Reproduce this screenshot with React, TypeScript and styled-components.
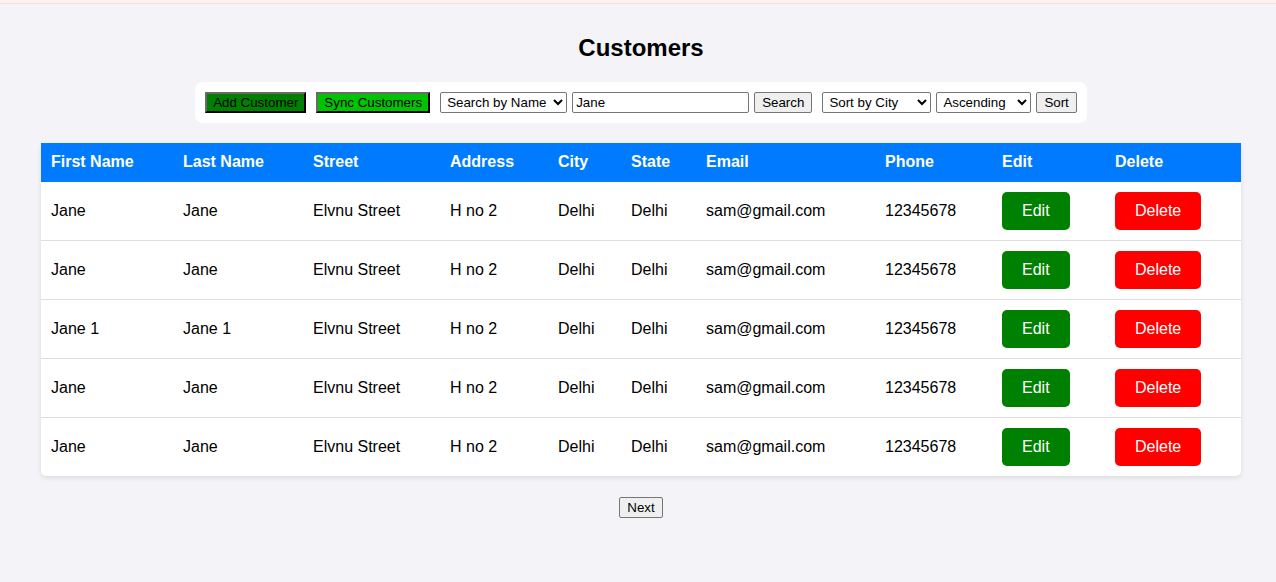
import React from "react";
import styled, { createGlobalStyle } from "styled-components";

const Global = createGlobalStyle`
  html, body { margin: 0; padding: 0; background: #f4f4f8; }
  body { font-family: "Liberation Sans", Arial, sans-serif; color: #000; }
`;

const TopStrip = styled.div`
  height: 3px;
  background: #fdf0ef;
  border-bottom: 1px solid #f6e2e0;
`;

const Page = styled.div`
  padding-left: 6px;
  display: flex;
  flex-direction: column;
  align-items: center;
`;

const Title = styled.h2`
  margin: 30px 0 20px;
  font-size: 24px;
  line-height: 28px;
  font-weight: bold;
`;

const Toolbar = styled.div`
  display: flex;
  align-items: center;
  background: #fff;
  border-radius: 8px;
  padding: 10px;
`;

const ColorButton = styled.button<{ $bg: string; $mr: number }>`
  font: 13.333px "Liberation Sans", Arial, sans-serif;
  height: 21px;
  padding: 1px 6px;
  margin-right: ${(p) => p.$mr}px;
  background: ${(p) => p.$bg};
  color: #000;
  border: 2px outset #767676;
  border-right-color: #111;
  border-bottom-color: #111;
  border-top-color: #6a6a6a;
  border-left-color: #6a6a6a;
  box-sizing: border-box;
`;

const PlainButton = styled.button<{ $mr?: number }>`
  font: 13.333px "Liberation Sans", Arial, sans-serif;
  height: 21px;
  padding: 1px 7px;
  margin-right: ${(p) => p.$mr ?? 0}px;
  background: #efefef;
  color: #000;
  border: 1px solid #767676;
  border-radius: 2px;
  box-sizing: border-box;
`;

const Select = styled.select<{ $w: number; $mr: number }>`
  font: 13.333px "Liberation Sans", Arial, sans-serif;
  width: ${(p) => p.$w}px;
  height: 21px;
  margin-right: ${(p) => p.$mr}px;
  background: #fff;
  color: #000;
  border: 1px solid #767676;
  border-radius: 2px;
  box-sizing: border-box;
  padding: 0 0 0 2px;
`;

const Input = styled.input`
  font: 13.333px "Liberation Sans", Arial, sans-serif;
  width: 177px;
  height: 21px;
  margin-right: 5px;
  padding: 1px 3px;
  border: 1px solid #767676;
  border-radius: 2px;
  box-sizing: border-box;
  color: #000;
`;

const Table = styled.table`
  margin-top: 20px;
  width: 1200px;
  table-layout: fixed;
  border-collapse: collapse;
  background: #fff;
  border-radius: 5px;
  box-shadow: 0 2px 5px rgba(0, 0, 0, 0.1);
  font-size: 16px;
`;

const Th = styled.th`
  background: #007bff;
  color: #fff;
  text-align: left;
  font-weight: bold;
  padding: 10px 10px 11px;
  line-height: 18px;
`;

const Tr = styled.tr`
  border-bottom: 1px solid #ddd;
  &:last-child { border-bottom: none; }
`;

const Td = styled.td`
  padding: 10px;
  height: 38px;
  line-height: 18px;
  vertical-align: middle;
`;

const ActionButton = styled.button<{ $bg: string }>`
  font: 16px "Liberation Sans", Arial, sans-serif;
  line-height: 18px;
  padding: 10px 20px;
  background: ${(p) => p.$bg};
  color: #fff;
  border: none;
  border-radius: 5px;
`;

const Footer = styled.div`
  margin-top: 21px;
`;

const cols = [132, 130, 137, 108, 73, 75, 179, 117, 113, 136];
const headers = ["First Name", "Last Name", "Street", "Address", "City", "State", "Email", "Phone", "Edit", "Delete"];
const rows = [
  ["Jane", "Jane"],
  ["Jane", "Jane"],
  ["Jane 1", "Jane 1"],
  ["Jane", "Jane"],
  ["Jane", "Jane"],
];

export default function App() {
  return (
    <>
      <Global />
      <TopStrip />
      <Page>
        <Title>Customers</Title>
        <Toolbar>
          <ColorButton $bg="#008000" $mr={10}>Add Customer</ColorButton>
          <ColorButton $bg="#00c400" $mr={10}>Sync Customers</ColorButton>
          <Select $w={127} $mr={5} defaultValue="name">
            <option value="name">Search by Name</option>
          </Select>
          <Input defaultValue="Jane" />
          <PlainButton $mr={10}>Search</PlainButton>
          <Select $w={109} $mr={5} defaultValue="city">
            <option value="city">Sort by City</option>
          </Select>
          <Select $w={95} $mr={5} defaultValue="asc">
            <option value="asc">Ascending</option>
          </Select>
          <PlainButton>Sort</PlainButton>
        </Toolbar>
        <Table>
          <colgroup>
            {cols.map((w, i) => (
              <col key={i} style={{ width: w }} />
            ))}
          </colgroup>
          <thead>
            <tr>
              {headers.map((h) => (
                <Th key={h}>{h}</Th>
              ))}
            </tr>
          </thead>
          <tbody>
            {rows.map((r, i) => (
              <Tr key={i}>
                <Td>{r[0]}</Td>
                <Td>{r[1]}</Td>
                <Td>Elvnu Street</Td>
                <Td>H no 2</Td>
                <Td>Delhi</Td>
                <Td>Delhi</Td>
                <Td>sam@gmail.com</Td>
                <Td>12345678</Td>
                <Td>
                  <ActionButton $bg="#008000">Edit</ActionButton>
                </Td>
                <Td>
                  <ActionButton $bg="#ff0000">Delete</ActionButton>
                </Td>
              </Tr>
            ))}
          </tbody>
        </Table>
        <Footer>
          <PlainButton>Next</PlainButton>
        </Footer>
      </Page>
    </>
  );
}
